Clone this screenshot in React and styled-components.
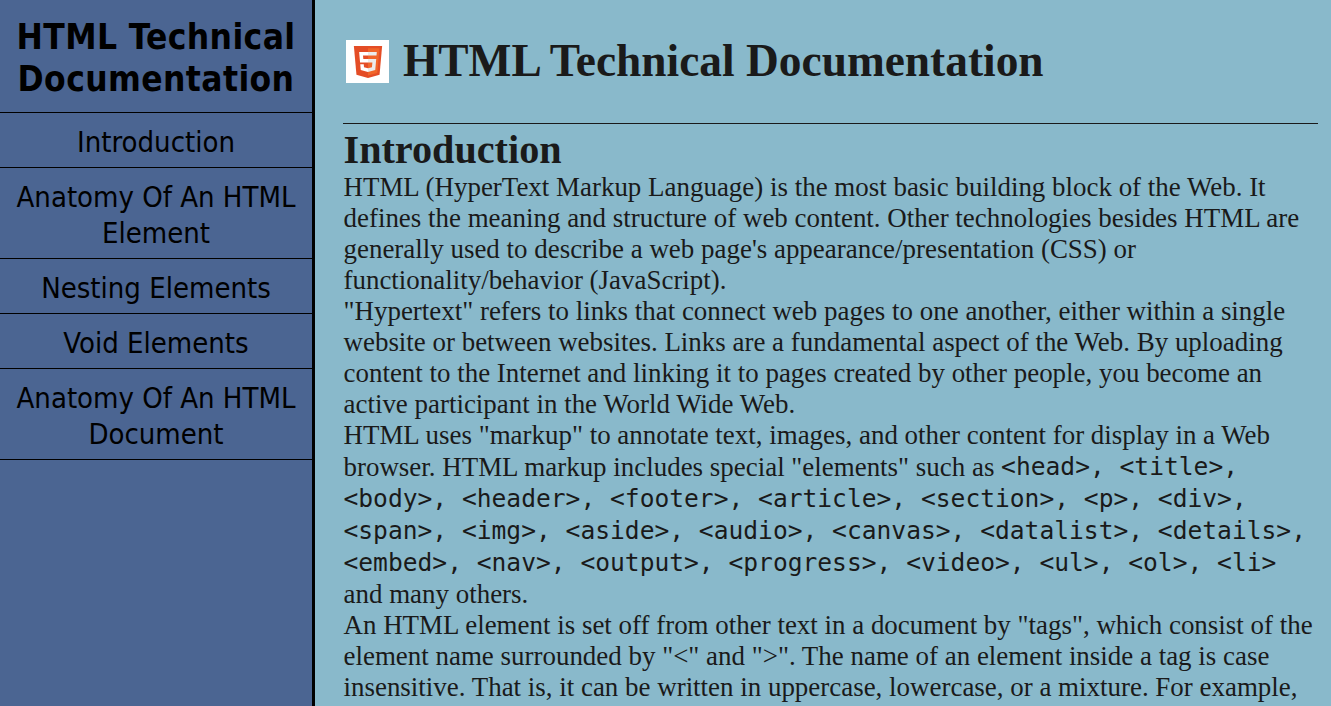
import { createGlobalStyle } from "styled-components";
import styled from "styled-components";

const GlobalStyle = createGlobalStyle`
  html, body {
    margin: 0;
    padding: 0;
    height: 100%;
    overflow: hidden;
    background-color: #89b9cb;
  }
`;

const Page = styled.div`
  display: flex;
  height: 706px;
  overflow: hidden;
`;

const Sidebar = styled.nav`
  flex: 0 0 312px;
  background-color: #4b6592;
  border-right: 3px solid #000;
  color: #000;
  font-family: "DejaVu Sans", sans-serif;
  font-stretch: condensed;
  text-align: center;
`;

const SidebarTitle = styled.h2`
  margin: 0;
  padding: 16px 0 12px;
  font-size: 35px;
  letter-spacing: 0.4px;
  line-height: 42px;
  font-weight: 700;
  border-bottom: 1px solid #000;
`;

const NavList = styled.ul`
  margin: 0;
  padding: 0;
  list-style: none;
`;

const NavItem = styled.li`
  padding: 11px 10px 7px;
  font-size: 29px;
  line-height: 36px;
  border-bottom: 1px solid #000;
`;

const Main = styled.main`
  flex: 1;
  min-width: 0;
  padding: 0 13px 0 28px;
  color: #1a1a1a;
  font-family: "Liberation Serif", "Times New Roman", serif;
  font-size: 26.95px;
  line-height: 31px;
`;

const Header = styled.header`
  display: flex;
  align-items: center;
  gap: 14px;
  height: 123px;
  padding-left: 3px;
  border-bottom: 1px solid #1a1a1a;
`;

const LogoBox = styled.span`
  display: flex;
  align-items: center;
  justify-content: center;
  width: 43px;
  height: 43px;
  background-color: #fff;
`;

const Title = styled.h1`
  margin: -2px 0 0;
  font-size: 45.4px;
  line-height: 52px;
  font-weight: 700;
`;

const Section = styled.section`
  padding-left: 0.5px;
`;

const SectionTitle = styled.h2`
  margin: 0;
  padding-top: 3px;
  font-size: 40.2px;
  line-height: 45px;
  font-weight: 700;
`;

const Paragraph = styled.p`
  margin: 0;
`;

const Code = styled.code`
  font-family: "DejaVu Sans Mono", "Liberation Mono", monospace;
  font-size: 24.6px;
  line-height: 32px;
  vertical-align: 1px;
`;

const Html5Logo = () => (
  <svg width="32" height="32" viewBox="0 0 512 512" aria-hidden="true">
    <path fill="#e44d26" d="M71 460 30 0h452l-41 460-185 52z" />
    <path fill="#f16529" d="M256 472l149-41 35-394H256z" />
    <path
      fill="#fff"
      d="M256 208h-75l-5-58h80V94H114l1 15 14 156h127zm0 147-1 0-63-17-4-45h-56l8 89 115 32 1 0z"
    />
    <path
      fill="#ebebeb"
      d="M256 208v57h70l-7 73-63 17v59l116-32 1-10 13-149 2-15zm0-114v56h136l1-12 3-29 1-15z"
    />
  </svg>
);

const navItems = [
  "Introduction",
  "Anatomy Of An HTML Element",
  "Nesting Elements",
  "Void Elements",
  "Anatomy Of An HTML Document"
];

const App = () => {
  return (
    <>
      <GlobalStyle />
      <Page>
        <Sidebar>
          <SidebarTitle>HTML Technical Documentation</SidebarTitle>
          <NavList>
            {navItems.map((item) => (
              <NavItem key={item}>{item}</NavItem>
            ))}
          </NavList>
        </Sidebar>

        <Main>
          <Header>
            <LogoBox>
              <Html5Logo />
            </LogoBox>
            <Title>HTML Technical Documentation</Title>
          </Header>

          <Section>
            <SectionTitle>Introduction</SectionTitle>
            <Paragraph>
              HTML (HyperText Markup Language) is the most basic building block
              of the Web. It defines the meaning and structure of web content.
              Other technologies besides HTML are generally used to describe a
              web page's appearance/presentation (CSS) or
              functionality/behavior (JavaScript).
            </Paragraph>
            <Paragraph>
              "Hypertext" refers to links that connect web pages to one another,
              either within a single website or between websites. Links are a
              fundamental aspect of the Web. By uploading content to the
              Internet and linking it to pages created by other people, you
              become an active participant in the World Wide Web.
            </Paragraph>
            <Paragraph>
              HTML uses "markup" to annotate text, images, and other content for
              display in a Web browser. HTML markup includes special "elements"
              such as{" "}
              <Code>
                {"<head>, <title>, <body>, <header>, <footer>, <article>, <section>, <p>, <div>, <span>, <img>, <aside>, <audio>, <canvas>, <datalist>, <details>, <embed>, <nav>, <output>, <progress>, <video>, <ul>, <ol>, <li>"}
              </Code>{" "}
              and many others.
            </Paragraph>
            <Paragraph>
              An HTML element is set off from other text in a document by
              "tags", which consist of the element name surrounded by "&lt;" and
              "&gt;". The name of an element inside a tag is case insensitive.
              That is, it can be written in uppercase, lowercase, or a mixture.
              For example,
            </Paragraph>
          </Section>
        </Main>
      </Page>
    </>
  );
};

export default App;
